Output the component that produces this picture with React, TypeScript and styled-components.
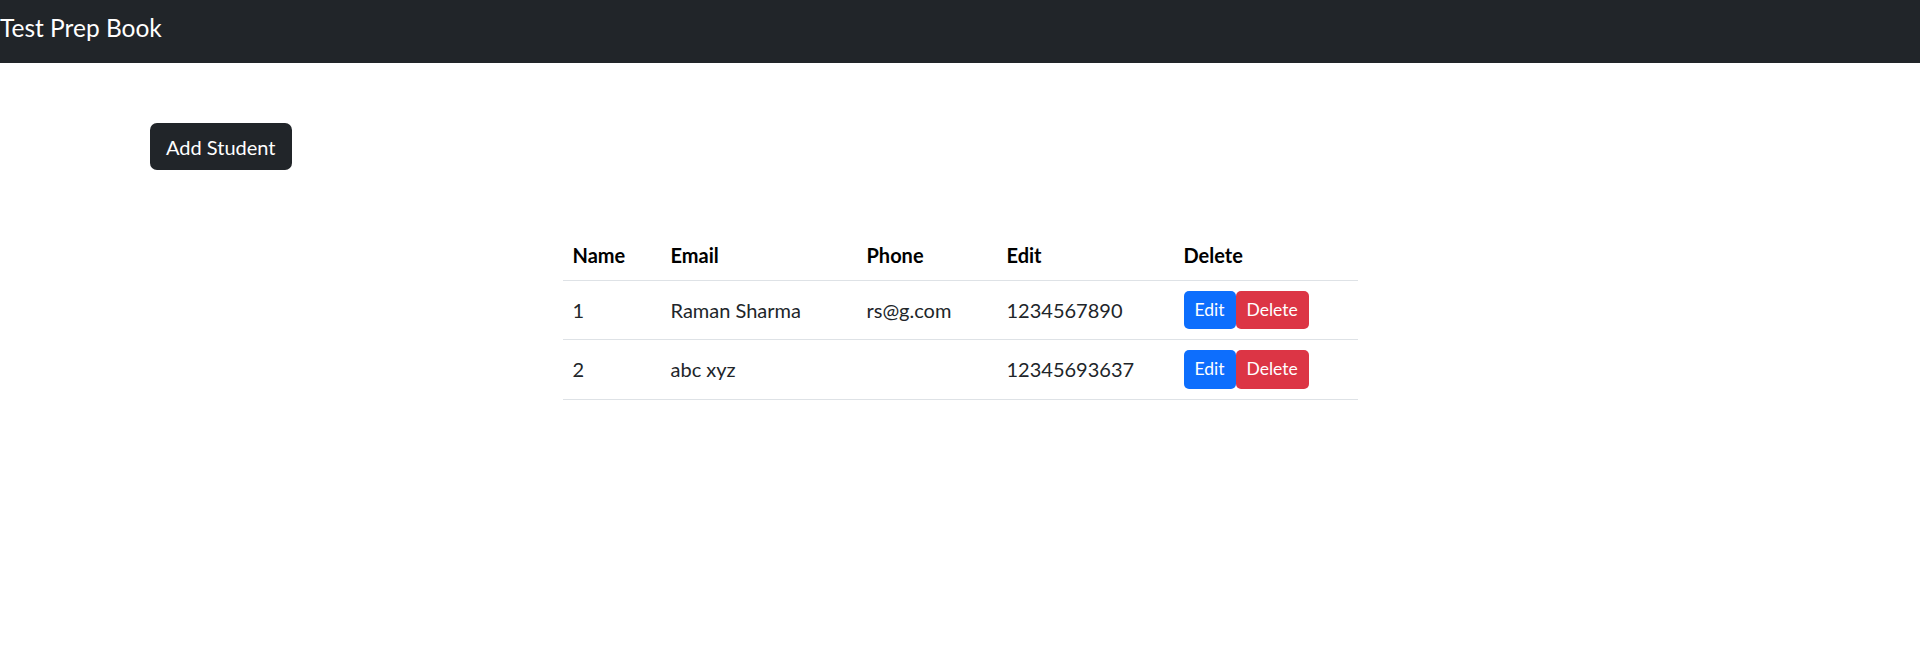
import React from 'react';
import styled, { createGlobalStyle } from 'styled-components';

const GlobalStyle = createGlobalStyle`
  *, *::before, *::after {
    box-sizing: border-box;
  }
  body {
    margin: 0;
    font-family: Lato, "Liberation Sans", sans-serif;
    color: #212529;
    background: #fff;
  }
`;

const Navbar = styled.nav`
  background-color: #212529;
  height: 63px;
  display: flex;
  align-items: center;
`;

const Brand = styled.a`
  color: #fff;
  font-size: 24.5px;
  line-height: 1;
  text-decoration: none;
  margin-top: -6px;
`;

const Container = styled.main`
  max-width: 1650px;
  margin: 0 auto;
  padding: 60px 15px 0;
`;

const Toolbar = styled.div`
  display: flex;
`;

const Button = styled.button<{ $variant: 'dark' | 'primary' | 'danger'; $small?: boolean }>`
  font-family: inherit;
  border: 1px solid transparent;
  border-radius: ${p => (p.$small ? '5px' : '7px')};
  color: #fff;
  cursor: pointer;
  font-size: ${p => (p.$small ? '17.5px' : '20px')};
  line-height: 1.5;
  padding: ${p => (p.$small ? '5px 10px' : '7.5px 15px')};
  background-color: ${p =>
    p.$variant === 'dark' ? '#212529' : p.$variant === 'primary' ? '#0d6efd' : '#dc3545'};
`;

const TableWrap = styled.div`
  display: flex;
  justify-content: center;
  margin-top: 60px;
`;

const Table = styled.table`
  width: 795px;
  table-layout: fixed;
  border-collapse: collapse;
  font-size: 20px;
  line-height: 1.5;
  vertical-align: top;
`;

const Th = styled.th<{ $w: number }>`
  width: ${p => p.$w}px;
  text-align: left;
  font-weight: 700;
  color: #000;
  padding: 10px;
  border-bottom: 1px solid #dee2e6;
  vertical-align: bottom;
`;

const Td = styled.td`
  padding: 10px;
  border-bottom: 1px solid #dee2e6;
  white-space: nowrap;
`;

const students = [
  { id: 1, name: 'Raman Sharma', email: 'rs@g.com', phone: '1234567890' },
  { id: 2, name: 'abc xyz', email: '', phone: '12345693637' },
];

function App() {
  return (
    <>
      <GlobalStyle />
      <Navbar>
        <Brand href="#">Test Prep Book</Brand>
      </Navbar>
      <Container>
        <Toolbar>
          <Button $variant="dark">Add Student</Button>
        </Toolbar>
        <TableWrap>
          <Table>
            <thead>
              <tr>
                <Th $w={98}>Name</Th>
                <Th $w={196}>Email</Th>
                <Th $w={140}>Phone</Th>
                <Th $w={177}>Edit</Th>
                <Th $w={184}>Delete</Th>
              </tr>
            </thead>
            <tbody>
              {students.map(s => (
                <tr key={s.id}>
                  <Td>{s.id}</Td>
                  <Td>{s.name}</Td>
                  <Td>{s.email}</Td>
                  <Td>{s.phone}</Td>
                  <Td>
                    <Button $variant="primary" $small>Edit</Button>
                    <Button $variant="danger" $small>Delete</Button>
                  </Td>
                </tr>
              ))}
            </tbody>
          </Table>
        </TableWrap>
      </Container>
    </>
  );
}

export default App;
